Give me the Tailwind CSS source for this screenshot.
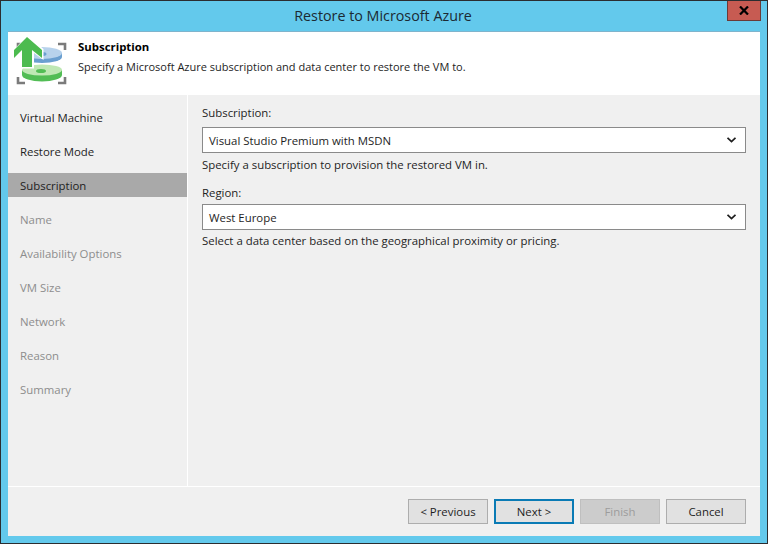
<!DOCTYPE html>
<html lang="en">
  <head>
    <meta charset="utf-8" />
    <title>Restore to Microsoft Azure</title>
    <script src="https://cdn.jsdelivr.net/npm/@tailwindcss/browser@4"></script>
  </head>
  <body class="m-0">
    <div class="w-[768px] h-[544px] overflow-hidden flex flex-col border border-[#2b2d30] bg-[#63c9ec] font-['Open_Sans',sans-serif] text-[11.4px] text-[#1e1e1e] antialiased">
      <!-- title bar -->
      <div class="h-[30px] shrink-0 flex justify-end relative">
        <div class="absolute inset-x-0 top-[5px] pr-[2px] text-center text-[14.3px] leading-[20px] text-[#1b2a33]">Restore to Microsoft Azure</div>
        <div class="w-[34px] h-[21px] mr-[6px] -mt-px border border-[#6b3a37] bg-[#c75b52] flex items-center justify-center relative">
          <svg width="10" height="9" viewBox="0 0 10 9"><path d="M1 0.5 L9 8.5 M9 0.5 L1 8.5" stroke="#000" stroke-width="2.2" fill="none" /></svg>
        </div>
      </div>

      <div class="mx-[7px] w-[752px] h-[505px] flex flex-col bg-[#f0f0f0]">
        <!-- header -->
        <div class="h-[64px] shrink-0 bg-white flex border-t border-[#7fb4cc]">
          <svg class="ml-[2px] mt-[2px] shrink-0" width="60" height="56" viewBox="0 0 60 56">
            <path d="M15 10 H8 V16 M48 10 H55 V16 M8 43 V49 H15 M55 43 V49 H48" stroke="#7b7b7b" stroke-width="2.6" fill="none" />
            <ellipse cx="32" cy="23" rx="20" ry="6" fill="#6a9fd0" />
            <rect x="12" y="19" width="40" height="4" fill="#6a9fd0" />
            <ellipse cx="32" cy="19" rx="20" ry="6" fill="#b7d2ec" />
            <ellipse cx="32" cy="20" rx="4.5" ry="2" fill="#6a9fd0" />
            <ellipse cx="32" cy="41" rx="20" ry="6.5" fill="#52bd55" />
            <rect x="12" y="36" width="40" height="5" fill="#52bd55" />
            <ellipse cx="32" cy="36" rx="20" ry="5.5" fill="#bfe8b4" />
            <ellipse cx="31" cy="37" rx="5" ry="2" fill="#52bd55" />
            <path d="M17 1 L33.5 15 V26 L24 19 V34.5 H12 V16 L4 24 V16 Z" fill="#fff" />
            <path d="M17 3 L32 16 V24 L22 16 V33 H12 V16 L4 24 V16 Z" fill="#4cbb4f" />
          </svg>
          <div class="ml-[8px] flex flex-col">
            <div class="mt-[6px] leading-[17px] font-bold text-black">Subscription</div>
            <div class="mt-[3px] leading-[17px] text-[11px]">Specify a Microsoft Azure subscription and data center to restore the VM to.</div>
          </div>
        </div>

        <!-- body -->
        <div class="flex h-[392px] shrink-0 border-b border-white">
          <div class="w-[179px] shrink-0 pt-[10px] flex flex-col gap-[10px] leading-[26px]">
            <div class="h-[24px] pl-[12px]">Virtual Machine</div>
            <div class="h-[24px] pl-[12px]">Restore Mode</div>
            <div class="h-[24px] pl-[12px] bg-[#a9a9a9]">Subscription</div>
            <div class="h-[24px] pl-[12px] text-[#8d8d8d]">Name</div>
            <div class="h-[24px] pl-[12px] text-[#8d8d8d]">Availability Options</div>
            <div class="h-[24px] pl-[12px] text-[#8d8d8d]">VM Size</div>
            <div class="h-[24px] pl-[12px] text-[#8d8d8d]">Network</div>
            <div class="h-[24px] pl-[12px] text-[#8d8d8d]">Reason</div>
            <div class="h-[24px] pl-[12px] text-[#8d8d8d]">Summary</div>
          </div>
          <div class="flex-1 border-l border-white pl-[14px] pr-[14px] pt-[9px] flex flex-col">
            <div class="leading-[18px]">Subscription:</div>
            <div class="mt-[5px] h-[26px] border border-[#8a8a8a] bg-white flex items-center justify-between pl-[6px] pr-[9px]">
              <span class="pt-[2px]">Visual Studio Premium with MSDN</span>
              <svg width="9" height="6" viewBox="0 0 9 6"><path d="M0.5 0.8 L4.5 4.6 L8.5 0.8" stroke="#1e1e1e" stroke-width="1.8" fill="none" /></svg>
            </div>
            <div class="mt-[3px] leading-[17px]">Specify a subscription to provision the restored VM in.</div>
            <div class="mt-[11px] leading-[18px]">Region:</div>
            <div class="mt-[2px] h-[26px] border border-[#8a8a8a] bg-white flex items-center justify-between pl-[6px] pr-[9px]">
              <span class="pt-[2px]">West Europe</span>
              <svg width="9" height="6" viewBox="0 0 9 6"><path d="M0.5 0.8 L4.5 4.6 L8.5 0.8" stroke="#1e1e1e" stroke-width="1.8" fill="none" /></svg>
            </div>
            <div class="mt-[2px] leading-[17px]">Select a data center based on the geographical proximity or pricing.</div>
          </div>
        </div>

        <!-- footer -->
        <div class="flex-1 flex justify-end items-start gap-[6px] pt-[12px] pr-[14px]">
          <div class="w-[80px] h-[25px] border border-[#adadad] bg-[#e1e1e1] flex items-center justify-center">&lt; Previous</div>
          <div class="w-[80px] h-[25px] border-2 border-[#0a7bb5] bg-[#e1e1e1] flex items-center justify-center">Next &gt;</div>
          <div class="w-[80px] h-[25px] border border-[#bfbfbf] bg-[#cccccc] text-[#9c9c9c] flex items-center justify-center">Finish</div>
          <div class="w-[80px] h-[25px] border border-[#adadad] bg-[#e1e1e1] flex items-center justify-center">Cancel</div>
        </div>
      </div>
    </div>
  </body>
</html>
